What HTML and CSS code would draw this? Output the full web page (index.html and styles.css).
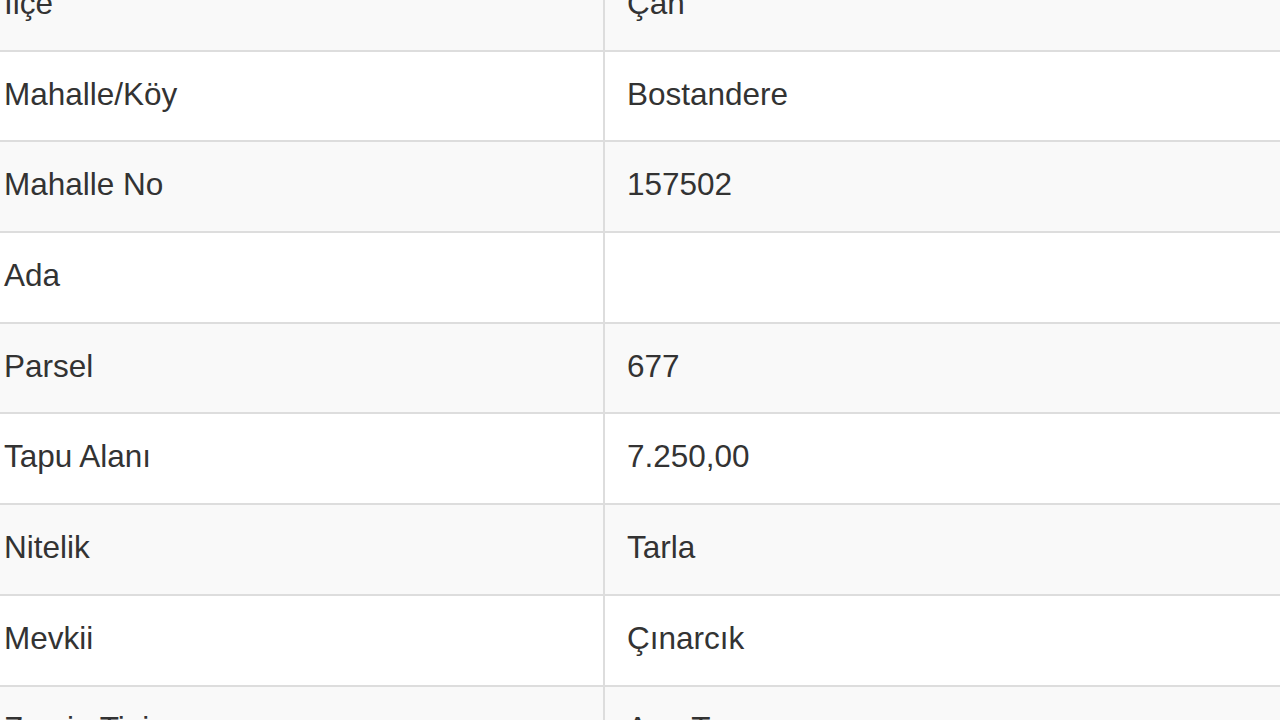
FILE: index.html
```html
<!DOCTYPE html>
<html lang="tr">
<head>
<meta charset="utf-8">
<title>Tapu Bilgileri</title>
<link rel="stylesheet" href="styles.css">
</head>
<body>
<div class="viewport">
<table class="info-table">
  <tbody>
    <tr class="odd"><td class="label">İlçe</td><td class="value">Çan</td></tr>
    <tr><td class="label">Mahalle/Köy</td><td class="value">Bostandere</td></tr>
    <tr class="odd"><td class="label">Mahalle No</td><td class="value">157502</td></tr>
    <tr><td class="label">Ada</td><td class="value"></td></tr>
    <tr class="odd"><td class="label">Parsel</td><td class="value">677</td></tr>
    <tr><td class="label">Tapu Alanı</td><td class="value">7.250,00</td></tr>
    <tr class="odd"><td class="label">Nitelik</td><td class="value">Tarla</td></tr>
    <tr><td class="label">Mevkii</td><td class="value">Çınarcık</td></tr>
    <tr class="odd"><td class="label">Zemin Tipi</td><td class="value">Ana Taşınmaz</td></tr>
  </tbody>
</table>
</div>
</body>
</html>
```
FILE: styles.css
```css
html, body {
  margin: 0;
  padding: 0;
  background: #ffffff;
}
.viewport {
  width: 1280px;
  height: 720px;
  overflow: hidden;
}
.info-table {
  border-collapse: collapse;
  width: 1340px;
  margin-left: -18px;
  margin-top: -41px;
  font-family: "Liberation Sans", Arial, sans-serif;
  font-size: 31.5px;
  color: #333333;
  table-layout: fixed;
}
.info-table td {
  height: 90.7px;
  padding: 0 22px 4px;
  border-top: 2px solid #dddddd;
  border-bottom: 2px solid #dddddd;
  vertical-align: middle;
  box-sizing: border-box;
}
.info-table .label {
  width: 622px;
  border-right: 2px solid #dddddd;
}
.info-table tr.odd td {
  background: #f9f9f9;
}
```
